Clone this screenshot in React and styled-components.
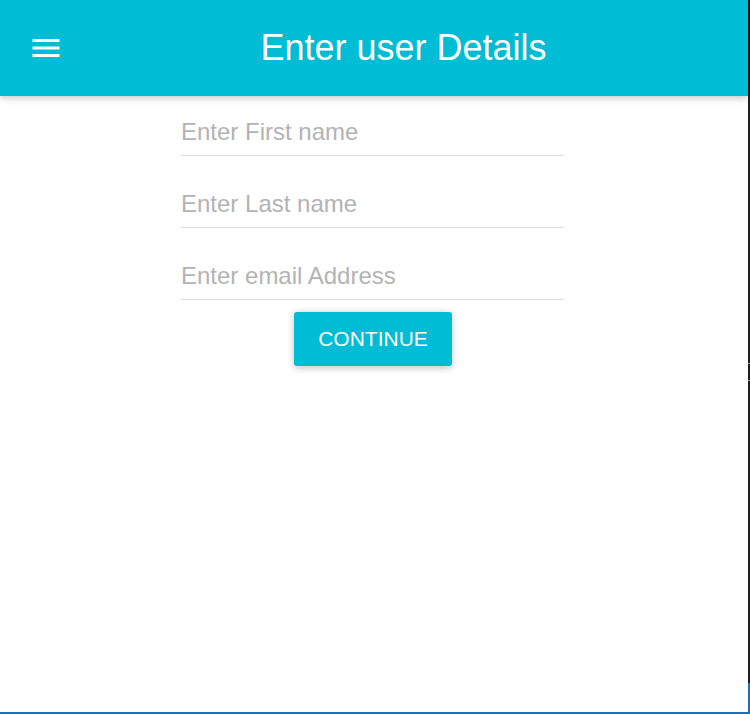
import React from 'react'
import styled, { createGlobalStyle } from 'styled-components'

const GlobalStyle = createGlobalStyle`
  html, body {
    margin: 0;
    padding: 0;
    background: #ffffff;
    font-family: "Liberation Sans", Arial, sans-serif;
  }
`

const fields = ['Enter First name', 'Enter Last name', 'Enter email Address']

const MenuIcon = () => (
  <svg width="36" height="36" viewBox="0 0 24 24" fill="#ffffff">
    <path d="M3 18h18v-2H3v2zm0-5h18v-2H3v2zm0-7v2h18V6H3z" />
  </svg>
)

const App = () => {
  return (
    <Frame>
      <GlobalStyle />
      <Screen>
        <AppBar>
          <IconButton type="button" aria-label="menu">
            <MenuIcon />
          </IconButton>
          <Title>Enter user Details</Title>
        </AppBar>
        <Form>
          {fields.map((f) => (
            <Field key={f}>
              <Input placeholder={f} />
            </Field>
          ))}
          <RaisedButton type="button">Continue</RaisedButton>
        </Form>
      </Screen>
      <Edge>
        <EdgeDark>
          <Tick />
          <Tick />
        </EdgeDark>
        <EdgeBlue />
      </Edge>
    </Frame>
  )
}

export default App

const Frame = styled.div`
  display: flex;
  width: 750px;
  height: 714px;
  overflow: hidden;
`

const Screen = styled.div`
  width: 748px;
  height: 712px;
  border-bottom: 2px solid #1472c4;
  background: #ffffff;
`

const AppBar = styled.header`
  display: flex;
  align-items: center;
  height: 96px;
  padding: 0 23px 0 10px;
  background-color: #00bcd4;
  box-shadow: 0 1.5px 9px rgba(0, 0, 0, 0.12), 0 1.5px 6px rgba(0, 0, 0, 0.12);
  position: relative;
  z-index: 1;
`

const IconButton = styled.button`
  display: flex;
  align-items: center;
  justify-content: center;
  width: 72px;
  height: 72px;
  padding: 0;
  border: none;
  background: transparent;
  cursor: pointer;
`

const Title = styled.h1`
  flex: 1;
  margin: 0;
  text-align: center;
  color: #ffffff;
  font-size: 36px;
  font-weight: 400;
  line-height: 96px;
  white-space: nowrap;
`

const Form = styled.div`
  display: flex;
  flex-direction: column;
  align-items: center;
  width: 384px;
  margin: 0 auto;
  position: relative;
  left: -1px;
`

const Field = styled.div`
  width: 100%;
  height: 72px;
`

const Input = styled.input`
  display: block;
  box-sizing: border-box;
  width: 100%;
  height: 60px;
  padding: 12px 0 0 0;
  border: none;
  border-bottom: 1px solid #e0e0e0;
  outline: none;
  background: transparent;
  font-family: "Liberation Sans", Arial, sans-serif;
  font-size: 24px;
  color: rgba(0, 0, 0, 0.87);

  &::placeholder {
    color: #b3b3b3;
  }
`

const RaisedButton = styled.button`
  height: 54px;
  padding: 0 24px;
  border: none;
  border-radius: 3px;
  background-color: #00bcd4;
  color: #ffffff;
  font-family: "Liberation Sans", Arial, sans-serif;
  font-size: 21px;
  text-transform: uppercase;
  letter-spacing: 0;
  box-shadow: 0 1.5px 9px rgba(0, 0, 0, 0.12), 0 1.5px 6px rgba(0, 0, 0, 0.12);
  cursor: pointer;
`

const Edge = styled.div`
  display: flex;
  flex-direction: column;
  width: 2px;
  height: 714px;
`

const EdgeDark = styled.div`
  flex: 1;
  display: flex;
  flex-direction: column;
  gap: 16px;
  padding-top: 363px;
  background: #1e1e1e;
`

const Tick = styled.div`
  height: 1px;
  background: #9a9a9a;
`

const EdgeBlue = styled.div`
  height: 31px;
  background: #1472c4;
`
